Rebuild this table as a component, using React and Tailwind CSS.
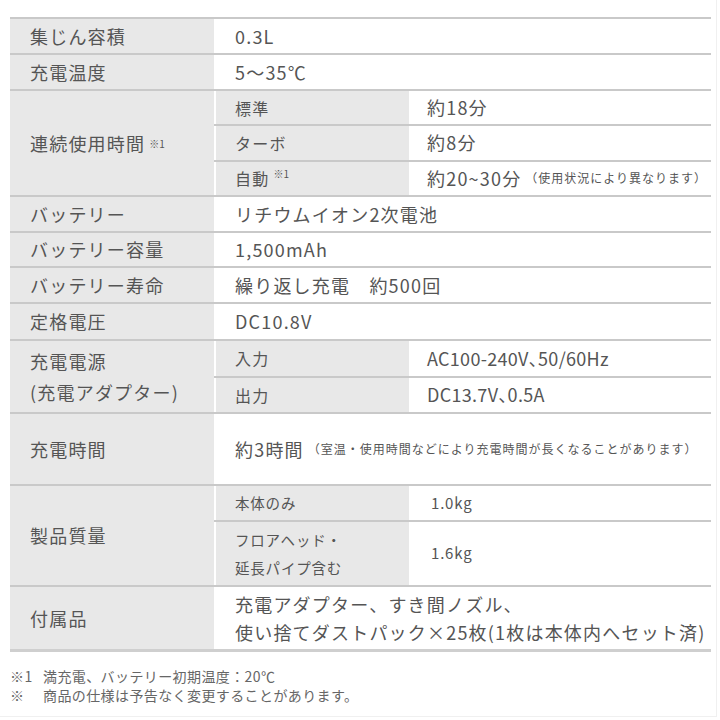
import React from 'react';

const font = { fontFamily: '"Noto Sans CJK JP", "Noto Sans", sans-serif' };

function Row({ label, h, children, last }) {
  return (
    <div className={`flex border-t-2 border-[#c9c9c9] ${last ? 'border-b-[3px] border-b-[#cfcfcf]' : ''}`} style={{ height: h }}>
      <div className="w-[204px] shrink-0 bg-[#e8e8e8] pl-5 flex items-center leading-[31px]">{label}</div>
      <div className="flex-1 flex flex-col">{children}</div>
    </div>
  );
}

function Value({ children, className = '' }) {
  return <div className={`flex-1 flex items-center pl-[21px] bg-white ${className}`}>{children}</div>;
}

function Sub({ label, children, first, small }) {
  return (
    <div className={`flex flex-1 ${first ? '' : 'border-t-2 border-[#c9c9c9]'}`}>
      <div className={`w-[195px] shrink-0 bg-[#e8e8e8] border-l-2 border-white pl-[19px] flex items-center ${small ? 'text-[14.5px] tracking-[0.8px] leading-[28px]' : 'text-[16px]'}`}>{label}</div>
      <div className={`flex-1 flex items-center pl-[18px] bg-white ${small ? 'text-[15px] tracking-[0.8px]' : ''}`}>{children}</div>
    </div>
  );
}

export default function App() {
  return (
    <div className="w-[720px] h-[720px] bg-white text-[#555] text-[18px] tracking-[1.2px] relative" style={font}>
      <div className="absolute right-[3px] top-0 bottom-[3px] w-px bg-[#f0f0f0]" />
      <div className="absolute left-0 right-[3px] bottom-[3px] h-px bg-[#f0f0f0]" />
      <div className="pt-[17px] pl-[10px] pr-[9px]">
        <Row label="集じん容積" h={36}><Value>0.3L</Value></Row>
        <Row label="充電温度" h={36}><Value>5〜35℃</Value></Row>
        <Row label={<span>連続使用時間<span className="text-[10px] align-top ml-1 tracking-normal">※1</span></span>} h={106}>
          <Sub first label="標準">約18分</Sub>
          <Sub label="ターボ">約8分</Sub>
          <Sub label={<span>自動<span className="text-[10px] align-top ml-1 tracking-normal">※1</span></span>}>
            約20~30分<span className="text-[12px] ml-1 tracking-[1px]">（使用状況により異なります）</span>
          </Sub>
        </Row>
        <Row label="バッテリー" h={36}><Value>リチウムイオン2次電池</Value></Row>
        <Row label="バッテリー容量" h={35}><Value>1,500mAh</Value></Row>
        <Row label="バッテリー寿命" h={36}><Value>繰り返し充電　約500回</Value></Row>
        <Row label="定格電圧" h={37}><Value>DC10.8V</Value></Row>
        <Row label={<span>充電電源<br />(充電アダプター)</span>} h={73}>
          <Sub first label="入力"><span className="tracking-[0.3px] [font-feature-settings:'palt']">AC100-240V、50/60Hz</span></Sub>
          <Sub label="出力"><span className="tracking-[0.3px] [font-feature-settings:'palt']">DC13.7V、0.5A</span></Sub>
        </Row>
        <Row label="充電時間" h={72}>
          <Value>約3時間<span className="text-[12px] ml-1 tracking-[1px]">（室温・使用時間などにより充電時間が長くなることがあります）</span></Value>
        </Row>
        <Row label="製品質量" h={101}>
          <Sub first small label="本体のみ"><span className="pl-1">1.0kg</span></Sub>
          <div className="flex h-[65px] border-t-2 border-[#c9c9c9]">
            <div className="w-[195px] shrink-0 bg-[#e8e8e8] border-l-2 border-white pl-[19px] flex items-center text-[14.5px] tracking-[0.8px] leading-[28px]">フロアヘッド・<br />延長パイプ含む</div>
            <div className="flex-1 flex items-center pl-[22px] bg-white text-[15px] tracking-[0.8px]">1.6kg</div>
          </div>
        </Row>
        <Row label="付属品" h={67} last>
          <Value className="leading-[28px]"><span>充電アダプター、すき間ノズル、<br />使い捨てダストパック×25枚(1枚は本体内へセット済)</span></Value>
        </Row>
        <div className="pt-[15px] text-[14px] leading-[19px] text-[#666] tracking-[0.4px]">
          <div className="flex"><span className="w-[33px]">※1</span><span>満充電、バッテリー初期温度：20℃</span></div>
          <div className="flex"><span className="w-[33px]">※</span><span>商品の仕様は予告なく変更することがあります。</span></div>
        </div>
      </div>
    </div>
  );
}
